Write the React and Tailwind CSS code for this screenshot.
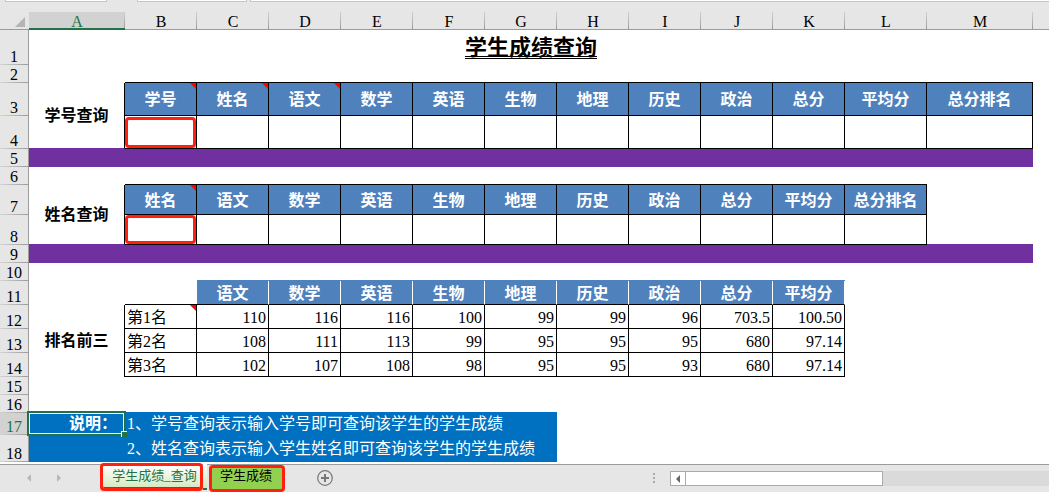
import React from "react";

const COLUMNS = [
  ["A", "w-24"],
  ["B", "w-[72px]"],
  ["C", "w-[72px]"],
  ["D", "w-[72px]"],
  ["E", "w-[72px]"],
  ["F", "w-[72px]"],
  ["G", "w-[72px]"],
  ["H", "w-[72px]"],
  ["I", "w-[72px]"],
  ["J", "w-[72px]"],
  ["K", "w-[72px]"],
  ["L", "w-[82px]"],
  ["M", "w-[106px]"],
];

const SUBJECTS = ["语文", "数学", "英语", "生物", "地理", "历史", "政治"];
const BY_ID = ["学号", "姓名", ...SUBJECTS, "总分", "平均分", "总分排名"];
const BY_NAME = ["姓名", ...SUBJECTS, "总分", "平均分", "总分排名"];
const TOP_HEAD = [...SUBJECTS, "总分", "平均分"];
const TOP_ROWS = [
  ["第1名", "110", "116", "116", "100", "99", "99", "96", "703.5", "100.50"],
  ["第2名", "108", "111", "113", "99", "95", "95", "95", "680", "97.14"],
  ["第3名", "102", "107", "108", "98", "95", "95", "93", "680", "97.14"],
];

const LABEL = "border-r border-r-black bg-white p-0 text-center font-bold";

function Note() {
  return (
    <span className="absolute top-0 right-0 size-1.5 bg-[#ff0000] [clip-path:polygon(0_0,100%_0,100%_100%)]" />
  );
}

function RowNo({ n, active }) {
  return (
    <th
      scope="row"
      className={
        "relative border-r border-[#9b9b9b] p-0 align-bottom text-base leading-4 font-normal " +
        (active ? "bg-[#d2d2d2] text-[#217346]" : "bg-[#e6e6e6] text-black")
      }
    >
      {n}
      <span className="absolute inset-x-0 bottom-0 h-px bg-linear-to-r from-[#d4d4d4] to-[#9b9b9b]" />
    </th>
  );
}

function HeadCell({ children, note }) {
  return (
    <th
      scope="col"
      className="relative border-r border-b border-black bg-[#4f81bd] px-0 pt-0.5 pb-0 text-center font-bold whitespace-nowrap text-white"
    >
      {children}
      {note && <Note />}
    </th>
  );
}

function EmptyCells({ count }) {
  return Array.from({ length: count }, (_, i) => (
    <td key={i} className="border-r border-b border-black p-0" />
  ));
}

function QueryCell({ label, height }) {
  return (
    <td className="border-r border-b border-black p-0">
      <input
        type="text"
        aria-label={label}
        className={
          "block w-full rounded-sm border-3 border-[#ff2010] bg-white px-1 text-base outline-none " +
          height
        }
      />
    </td>
  );
}

function Sheet() {
  return (
    <table className="w-full table-fixed border-separate border-spacing-0 text-base leading-4">
      <colgroup>
        <col className="w-[29px]" />
        {COLUMNS.map(([name, width]) => (
          <col key={name} className={width} />
        ))}
        <col />
      </colgroup>
      <thead>
        <tr className="h-[18px] bg-[#e6e6e6]">
          <td className="relative border-b border-[#9b9b9b] p-0">
            <span className="absolute right-1 bottom-0.5 size-2.5 bg-[#b4b4b4] [clip-path:polygon(100%_0,100%_100%,0_100%)]" />
          </td>
          {COLUMNS.map(([name], i) => (
            <th
              key={name}
              scope="col"
              className={
                "relative border-b px-0 pt-0.5 pb-0 align-bottom leading-[15px] font-normal " +
                (i === 0
                  ? "border-[#217346] bg-[#d2d2d2] text-[#217346]"
                  : "border-[#9b9b9b] text-black")
              }
            >
              {name}
              <span className="absolute inset-y-0 right-0 w-px bg-linear-to-b from-[#d0d0d0] to-[#9b9b9b]" />
              {i === 0 && <span className="absolute inset-x-0 bottom-0 h-px bg-[#217346]" />}
            </th>
          ))}
          <td className="border-b border-[#9b9b9b] p-0" />
        </tr>
      </thead>
      <tbody>
        <tr className="h-[35px]">
          <RowNo n={1} />
          <td colSpan={13} className="p-0 text-center">
            <h1 className="text-[22px] leading-7 font-bold underline decoration-double decoration-1 underline-offset-1 [text-decoration-skip-ink:none]">
              学生成绩查询
            </h1>
          </td>
          <td className="p-0" />
        </tr>
        <tr className="h-[18px]">
          <RowNo n={2} />
          <td className="p-0" />
          <td colSpan={12} className="border-b border-black p-0" />
          <td className="p-0" />
        </tr>
        <tr className="h-[33px]">
          <RowNo n={3} />
          <th rowSpan={2} scope="rowgroup" className={LABEL + " border-b border-b-[#7030a0]"}>
            学号查询
          </th>
          {BY_ID.map((t, i) => (
            <HeadCell key={t} note={i < 3}>
              {t}
            </HeadCell>
          ))}
          <td className="p-0" />
        </tr>
        <tr className="h-[33px]">
          <RowNo n={4} />
          <QueryCell label="学号" height="h-[31px]" />
          <EmptyCells count={11} />
          <td className="p-0" />
        </tr>
        <tr className="h-[18px]">
          <RowNo n={5} />
          <td colSpan={13} className="bg-[#7030a0] p-0" />
          <td className="p-0" />
        </tr>
        <tr className="h-[18px]">
          <RowNo n={6} />
          <td className="p-0" />
          <td colSpan={11} className="border-b border-black p-0" />
          <td colSpan={2} className="p-0" />
        </tr>
        <tr className="h-[30px]">
          <RowNo n={7} />
          <th rowSpan={2} scope="rowgroup" className={LABEL + " border-b border-b-[#7030a0]"}>
            姓名查询
          </th>
          {BY_NAME.map((t, i) => (
            <HeadCell key={t} note={i < 1}>
              {t}
            </HeadCell>
          ))}
          <td colSpan={2} className="p-0" />
        </tr>
        <tr className="h-[30px]">
          <RowNo n={8} />
          <QueryCell label="姓名" height="h-[29px]" />
          <EmptyCells count={10} />
          <td className="border-b border-[#7030a0] p-0" />
          <td className="p-0" />
        </tr>
        <tr className="h-[18px]">
          <RowNo n={9} />
          <td colSpan={13} className="bg-[#7030a0] p-0" />
          <td className="p-0" />
        </tr>
        <tr className="h-[18px]">
          <RowNo n={10} />
          <td colSpan={2} className="p-0" />
          <td colSpan={9} className="border-b border-[#4f81bd] p-0" />
          <td colSpan={3} className="p-0" />
        </tr>
        <tr className="h-6">
          <RowNo n={11} />
          <td className="p-0" />
          <td className="border-b border-black p-0" />
          {TOP_HEAD.map((t) => (
            <th
              key={t}
              scope="col"
              className="border-r border-b border-r-white border-b-black bg-[#4f81bd] px-0 pt-0.5 pb-0 text-center font-bold text-white"
            >
              {t}
            </th>
          ))}
          <td colSpan={3} className="p-0" />
        </tr>
        {TOP_ROWS.map((row, r) => (
          <tr key={row[0]} className="h-6">
            <RowNo n={12 + r} />
            {r === 0 && (
              <th rowSpan={3} scope="rowgroup" className={LABEL}>
                排名前三
              </th>
            )}
            {row.map((v, i) => (
              <td
                key={i}
                className={
                  "relative border-r border-b border-black px-0.5 pt-0.5 pb-0 " +
                  (i === 0 ? "text-left" : "text-right")
                }
              >
                {v}
                {r === 0 && i === 0 && <Note />}
              </td>
            ))}
            <td colSpan={3} className="p-0" />
          </tr>
        ))}
        <tr className="h-[18px]">
          <RowNo n={15} />
          <td colSpan={14} className="p-0" />
        </tr>
        <tr className="h-[18px]">
          <RowNo n={16} />
          <td colSpan={7} className="border-b border-[#0070c0] p-0" />
          <td colSpan={7} className="p-0" />
        </tr>
        <tr className="h-[22px]">
          <RowNo n={17} active />
          <td className="relative z-10 bg-[#0070c0] py-0 pr-2 pl-0 text-right font-bold text-white">
            说明：
            <span className="absolute -top-0.5 -right-px -bottom-px -left-0.5 border-2 border-[#217346]">
              <span className="absolute inset-0 border border-white" />
              <span className="absolute -right-[3px] -bottom-[3px] size-1.5 border-t border-l border-white bg-[#217346]" />
            </span>
          </td>
          <td colSpan={6} className="bg-[#0070c0] px-0.5 py-0 whitespace-nowrap text-white">
            1、学号查询表示输入学号即可查询该学生的学生成绩
          </td>
          <td colSpan={7} className="p-0" />
        </tr>
        <tr className="h-[27px]">
          <RowNo n={18} />
          <td className="bg-[#0070c0] p-0" />
          <td colSpan={6} className="bg-[#0070c0] px-0.5 py-0 whitespace-nowrap text-white">
            2、姓名查询表示输入学生姓名即可查询该学生的学生成绩
          </td>
          <td colSpan={7} className="p-0" />
        </tr>
      </tbody>
    </table>
  );
}

function SheetTabs() {
  return (
    <footer className="flex h-7 items-start border-t border-[#9b9b9b] bg-[#e6e6e6] text-[13px] leading-4">
      <nav className="flex w-[100px] shrink-0 gap-5 pt-2 pl-6">
        <button type="button" aria-label="上一个工作表" className="size-2.5">
          <svg viewBox="0 0 10 10" className="size-2.5" fill="#b8b8b8">
            <path d="M7 1v8L3 5z" />
          </svg>
        </button>
        <button type="button" aria-label="下一个工作表" className="size-2.5">
          <svg viewBox="0 0 10 10" className="size-2.5" fill="#b8b8b8">
            <path d="M3 1v8l4-4z" />
          </svg>
        </button>
      </nav>
      <button
        type="button"
        className="-mt-0.5 flex h-7 w-[103px] justify-center rounded-sm border-3 border-[#ff2010] bg-linear-to-b from-white to-[#d3e9bd] pt-0.5 pl-1.5 whitespace-nowrap text-[#217346] shadow-[inset_0_-1px_0_#217346]"
      >
        学生成绩_查询
      </button>
      <span className="-mt-px h-[26px] w-1 border-b-2 border-[#217346] bg-linear-to-b from-white to-[#d3e9bd]" />
      <button
        type="button"
        className="ml-0.5 flex h-[27px] w-[76px] justify-center rounded-sm border-3 border-[#ff2010] bg-[#92d050] pr-0.5 whitespace-nowrap text-black"
      >
        学生成绩
      </button>
      <button type="button" aria-label="新工作表" className="mt-[5px] ml-8 size-4">
        <svg viewBox="0 0 16 16" className="size-4" fill="none" stroke="#777">
          <circle cx="8" cy="8" r="7.3" strokeWidth="1.2" />
          <path d="M8 4v8M4 8h8" strokeWidth="2" />
        </svg>
      </button>
      <span className="mt-2 mr-[15px] ml-auto flex flex-col gap-0.5">
        <span className="size-0.5 bg-[#ababab]" />
        <span className="size-0.5 bg-[#ababab]" />
        <span className="size-0.5 bg-[#ababab]" />
      </span>
      <div className="mt-1.5 flex h-[15px] w-[379px] bg-[#dadada]">
        <button
          type="button"
          aria-label="向左滚动"
          className="flex w-4 items-center justify-center border border-[#ababab] bg-white"
        >
          <svg viewBox="0 0 8 8" className="size-2" fill="#666">
            <path d="M6 0v8L2 4z" />
          </svg>
        </button>
        <div className="-ml-px w-[198px] border border-[#ababab] bg-white" />
      </div>
    </footer>
  );
}

export default function App() {
  return (
    <div className="overflow-hidden bg-white font-['Liberation_Serif','Noto_Sans_CJK_SC',serif] text-black">
      <header className="flex h-3 items-start bg-[#e6e6e6] pl-[5px]">
        <div className="h-0.5 w-[102px] border-x border-b border-[#c6c6c6] bg-white" />
        <div className="ml-[30px] h-0.5 w-[110px] border-x border-b border-[#c6c6c6] bg-white" />
        <div className="ml-[3px] h-0.5 flex-1 border-b border-l border-[#c6c6c6] bg-white" />
      </header>
      <main className="pb-0.5">
        <Sheet />
      </main>
      <SheetTabs />
    </div>
  );
}
